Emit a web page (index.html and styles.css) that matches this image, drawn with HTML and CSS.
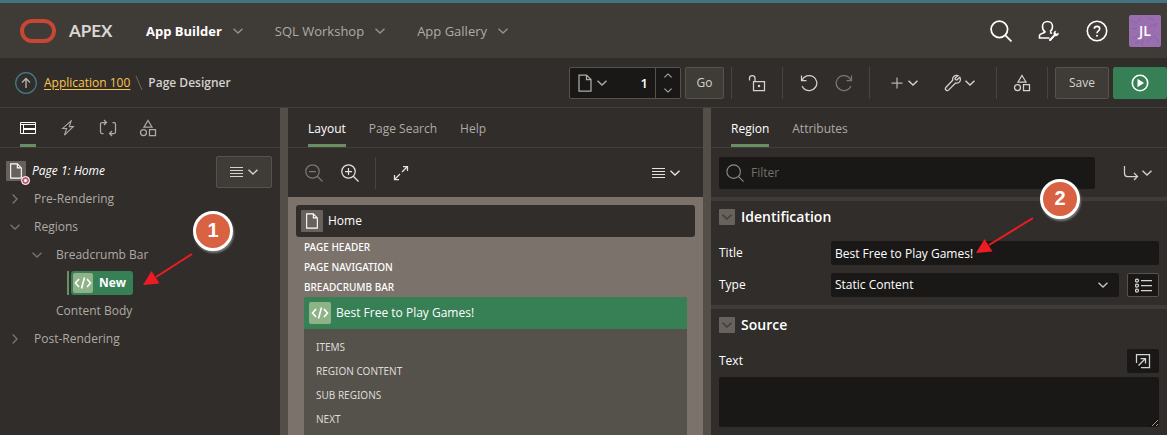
FILE: index.html
```html
<!DOCTYPE html>
<html lang="en">
<head>
<meta charset="utf-8">
<title>Page Designer</title>
<link rel="stylesheet" href="styles.css">
</head>
<body>
<svg class="defs" aria-hidden="true">
  <symbol id="chev" viewBox="0 0 10 6"><path d="M.5.7 5 5 9.500.7"/></symbol>
  <symbol id="page" viewBox="0 0 14 18"><path d="M1 1h7.500L13 5.500V17H1zM8.500 1v4.500H13"/></symbol>
  <symbol id="shapes" viewBox="0 0 18 18"><path d="M9 1.500 13 8H5zM10.500 10.500h6v6h-6z"/><circle cx="4.500" cy="13.500" r="3"/></symbol>
  <symbol id="menu" viewBox="0 0 13 12"><path d="M0 1.500h13M0 4.500h13M0 7.500h13M0 10.500h13"/></symbol>
  <symbol id="search" viewBox="0 0 20 20"><circle cx="8.500" cy="8.500" r="7.500"/><path d="m14 14 5.500 5.500"/></symbol>
  <symbol id="code" viewBox="0 0 18 12"><path d="M5 2 1.500 6 5 10M13 2l3.500 4L13 10M10.500.5l-3 11"/></symbol>
</svg>

<header class="header">
  <svg class="logo" viewBox="0 0 36 24"><rect x="2" y="2" width="32" height="20" rx="10"/></svg>
  <span class="brand">APEX</span>
  <nav class="nav">
    <button class="nav-item current">App Builder<svg class="ic chev"><use href="#chev"/></svg></button>
    <button class="nav-item">SQL Workshop<svg class="ic chev"><use href="#chev"/></svg></button>
    <button class="nav-item">App Gallery<svg class="ic chev"><use href="#chev"/></svg></button>
  </nav>
  <div class="header-tools">
    <button class="plain" aria-label="Search"><svg class="ic i22 thick"><use href="#search"/></svg></button>
    <button class="plain" aria-label="Administration"><svg class="ic i22 thick" viewBox="0 0 22 22"><path d="M11.500 18H1.500v-2.500c0-2 4.500-2.300 5.500-3.500C5 10.500 4.500 8.500 4.500 6.500 4.500 3.500 6.800 1.500 9.500 1.500s5 2 5 5c0 2-.8 4-2.500 5.200M12 12.500l2 1"/><path class="solid" d="M11 19.500 15.700 14.800C15 12.500 16.200 10.700 18.500 10.500L17.300 12.300 18.700 13.700 20.800 12.700C21 15.200 19 16.700 16.900 16.200L13 20.800C11.800 21.500 10.500 20.500 11 19.500z"/></svg></button>
    <button class="plain" aria-label="Help"><svg class="ic i22 thick" viewBox="0 0 22 22"><circle cx="11" cy="11" r="9.700"/><path d="M8.300 8.800C8.300 5.500 13.700 5.500 13.700 8.800 13.700 11 11 10.800 11 13.200"/><circle class="solid" cx="11" cy="15.700" r="1"/></svg></button>
    <button class="avatar" aria-label="Account"><svg class="avatar-art" viewBox="0 0 32 32"><path d="m2 5 5 3M12 2l-4 6M20 3l6 2M28 8l-3 5M3 14l5-1M4 24l5-4M14 25l-1 5M18 27l6-5M25 20l5 8M6 29l5-3M20 12l6-3"/></svg><span>JL</span></button>
  </div>
</header>

<div class="toolbar">
  <button class="plain" aria-label="Up"><svg class="up" viewBox="0 0 22 22"><circle cx="11" cy="11" r="10.300"/><path d="M11 16V6.500M7 10.500l4-4 4 4"/></svg></button>
  <nav class="crumbs"><a href="#app">Application 100</a><svg class="slash" viewBox="0 0 8 16"><path d="m1 1 6 14"/></svg><span>Page Designer</span></nav>
  <div class="actions">
    <div class="page-picker">
      <button class="plain pick" aria-label="Pick page"><svg class="ic page" viewBox="0 0 14 18"><use href="#page"/></svg><svg class="ic chev"><use href="#chev"/></svg></button>
      <input class="page-no" type="text" value="1" aria-label="Page number">
      <div class="spin"><button class="plain" aria-label="Next page"><svg class="ic chev tiny flip"><use href="#chev"/></svg></button><button class="plain" aria-label="Previous page"><svg class="ic chev tiny"><use href="#chev"/></svg></button></div>
    </div>
    <button class="btn go">Go</button>
    <div class="group g-lock"><button class="plain" aria-label="Unlocked"><svg class="ic i18" viewBox="0 0 18 18"><path d="M1.500 6.500V4C1.500.8 7 .8 7 4v3.500M5.500 7.500h11v9h-11z"/><path d="M10.500 11.500h1v1h-1z"/></svg></button></div>
    <div class="group g-undo"><button class="plain" aria-label="Undo"><svg class="ic i18" viewBox="0 0 18 18"><path d="M1.500 1.500v5h5M2 6.200C4 2 9 .3 13 2.500c4 2.300 5 7.500 2.300 11S7.500 18 4 14.800l-2-2.600"/></svg></button><button class="plain" aria-label="Redo" disabled><svg class="ic i18" viewBox="0 0 18 18"><path d="M16.500 1.500v5h-5M16 6.200C14 2 9 .3 5 2.500 1 4.800 0 10 2.700 13.500s7.800 4.500 11.300 1.300l2-2.600"/></svg></button></div>
    <div class="group g-menus"><button class="plain pair create" aria-label="Create"><svg class="ic i12 dim" viewBox="0 0 12 12"><path d="M6 .5v11M.5 6h11"/></svg><svg class="ic chev"><use href="#chev"/></svg></button><button class="plain pair" aria-label="Utilities"><svg class="ic i18" viewBox="0 0 18 18"><path d="M15.800 3.200 12.800 6l-1.500-.5L11 4.200l3-2.500c-2.800-1-6 .8-5.300 4.500L2 13.200c-1.800 2 .8 4.600 2.800 2.700L11.500 9c3.800.9 6-2.500 4.300-5.800z"/><path d="M3.600 14.200h.3"/></svg><svg class="ic chev"><use href="#chev"/></svg></button></div>
    <div class="group g-shared"><button class="plain" aria-label="Shared components"><svg class="ic i18"><use href="#shapes"/></svg></button></div>
    <div class="group g-save"><button class="btn save">Save</button><button class="btn run" aria-label="Save and run"><svg class="i18" viewBox="0 0 18 18"><circle cx="9" cy="9" r="7.700"/><path d="M6.500 4.700 13 9l-6.500 4.300z"/></svg></button></div>
  </div>
</div>

<main class="panes">
  <section class="pane">
    <div class="tabs tree-tabs">
      <button class="tab active" aria-label="Rendering"><svg class="ic i16 fine" viewBox="0 0 16 16"><path d="M.5 2.500h15v11H.5zM.5 4.500h15M3.500 4.500v9M3.500 8.500h12M3.500 9.500h12"/></svg></button>
      <button class="tab" aria-label="Dynamic actions"><svg class="ic i16" viewBox="0 0 16 18"><path d="M11.500 1 2 9.500h4.500L4 17l10-9.500H9.500L11.500 1z"/></svg></button>
      <button class="tab" aria-label="Processing"><svg class="ic i18" viewBox="0 0 18 18"><path d="M4.500 14.500H3q-1.500 0-1.500-1.500V5q0-1.500 1.500-1.500h4M5 1l2.500 2.500L5 6M13.500 3.500H15q1.500 0 1.500 1.500v8q0 1.500-1.500 1.500h-4M13 12l-2.500 2.500L13 17"/></svg></button>
      <button class="tab" aria-label="Shared components"><svg class="ic i18"><use href="#shapes"/></svg></button>
    </div>
    <div class="tree">
      <div class="tree-head">
        <span class="page-tile"><svg class="ic page" viewBox="0 0 14 18"><use href="#page"/></svg><span class="dot"></span></span>
        <em>Page 1: Home</em>
        <button class="btn pair tree-menu" aria-label="Tree menu"><svg class="ic menu"><use href="#menu"/></svg><svg class="ic chev"><use href="#chev"/></svg></button>
      </div>
      <ul>
        <li><div class="node"><svg class="ic chev side"><use href="#chev"/></svg>Pre-Rendering</div></li>
        <li><div class="node"><svg class="ic chev"><use href="#chev"/></svg>Regions</div>
          <ul>
            <li><div class="node"><svg class="ic chev"><use href="#chev"/></svg>Breadcrumb Bar</div>
              <div class="node picked"><span class="chip"><span class="code-tile small"><svg class="ic code"><use href="#code"/></svg></span>New</span></div></li>
            <li><div class="node leaf">Content Body</div></li>
          </ul></li>
        <li><div class="node"><svg class="ic chev side"><use href="#chev"/></svg>Post-Rendering</div></li>
      </ul>
    </div>
  </section>
  <div class="splitter"></div>

  <section class="pane">
    <div class="tabs text-tabs">
      <button class="tab active">Layout</button><button class="tab">Page Search</button><button class="tab">Help</button>
    </div>
    <div class="canvas-tools">
      <button class="plain" aria-label="Zoom out" disabled><svg class="ic i18" viewBox="0 0 18 18"><circle cx="7.500" cy="7.500" r="6.700"/><path d="m12.300 12.300 5.200 5.200M4 7.500h7"/></svg></button>
      <button class="plain zoom-in" aria-label="Zoom in"><svg class="ic i18" viewBox="0 0 18 18"><circle cx="7.500" cy="7.500" r="6.700"/><path d="m12.300 12.300 5.200 5.200M4 7.500h7M7.500 4v7"/></svg></button>
      <span class="rule"></span>
      <button class="plain" aria-label="Expand"><svg class="ic i16" viewBox="0 0 16 16"><path d="M10 1.500h4.500V6M14.500 1.500 9 7M1.500 10v4.500H6M1.500 14.500 7 9"/></svg></button>
      <button class="plain pair canvas-menu" aria-label="Layout menu"><svg class="ic menu"><use href="#menu"/></svg><svg class="ic chev"><use href="#chev"/></svg></button>
    </div>
    <div class="canvas">
      <div class="home"><span class="page-tile big"><svg class="ic page" viewBox="0 0 14 18"><use href="#page"/></svg></span>Home</div>
      <div class="slot">PAGE HEADER</div>
      <div class="slot">PAGE NAVIGATION</div>
      <div class="slot">BREADCRUMB BAR</div>
      <div class="region">
        <div class="region-head"><span class="code-tile"><svg class="ic code"><use href="#code"/></svg></span>Best Free to Play Games!</div>
        <div class="region-body"><div>ITEMS</div><div>REGION CONTENT</div><div>SUB REGIONS</div><div>NEXT</div></div>
      </div>
    </div>
  </section>
  <div class="splitter"></div>

  <section class="pane">
    <div class="tabs text-tabs">
      <button class="tab active">Region</button><button class="tab">Attributes</button>
    </div>
    <div class="filter-row">
      <label class="filter"><svg class="ic i18" viewBox="0 0 20 20"><use href="#search"/></svg><input type="text" placeholder="Filter" aria-label="Filter"></label>
      <button class="plain pair" aria-label="Go to group"><svg class="ic i16" viewBox="0 0 16 16"><path d="M1.500 1v7.500q0 3 3 3h9.500M11 8l3.500 3.500L11 15"/></svg><svg class="ic chev"><use href="#chev"/></svg></button>
    </div>
    <div class="props">
      <h2><button class="fold" aria-label="Collapse Identification"><svg class="ic chev"><use href="#chev"/></svg></button>Identification</h2>
      <div class="field"><label for="title">Title</label><input id="title" class="box" type="text" value="Best Free to Play Games!"></div>
      <div class="field"><label for="type">Type</label><div class="select-wrap"><select id="type" class="box"><option>Static Content</option></select><svg class="ic chev"><use href="#chev"/></svg></div><button class="side-btn lined" aria-label="Quick pick"><svg class="ic quick" viewBox="0 0 17 15"><path d="M6 2.500h11M6 7.500h11M6 12.500h11"/><circle cx="2" cy="2.500" r="1.500"/><circle cx="2" cy="7.500" r="1.500"/><circle cx="2" cy="12.500" r="1.500"/></svg></button></div>
    </div>
    <div class="props">
      <h2><button class="fold" aria-label="Collapse Source"><svg class="ic chev"><use href="#chev"/></svg></button>Source</h2>
      <div class="field spread"><label for="text">Text</label><button class="side-btn" aria-label="Open editor"><svg class="ic i16" viewBox="0 0 16 16"><path d="M1.500 10V1.500h13v13H6M5.500 5.500h5v5M10.500 5.500 3.500 12.500"/></svg></button></div>
      <textarea id="text" class="box area"></textarea>
    </div>
  </section>
</main>

<div class="callout one">1</div>
<svg class="arrow arrow-one" viewBox="0 0 60 40"><path class="shaft" d="M52 6 16 29"/><path class="tip" d="m3 37 8.500-14 8 12.500z"/></svg>
<div class="callout two">2</div>
<svg class="arrow arrow-two" viewBox="0 0 60 40"><path class="shaft" d="M60 2 16 29"/><path class="tip" d="m3 37 8.500-14 8 12.500z"/></svg>
</body>
</html>
```

FILE: styles.css
```css
* { box-sizing: border-box; }
html, body { height: 100%; }
body {
  margin: 0;
  display: flex;
  flex-direction: column;
  overflow: hidden;
  background: #312d2a;
  border-top: 3px solid #437280;
  color: #fff;
  font: 12px/16px "Open Sans", "Noto Sans", sans-serif;
}
button, input, select, textarea { font: inherit; color: inherit; margin: 0; }
button { cursor: pointer; padding: 0; }
.defs { position: absolute; width: 0; height: 0; }

.ic { display: block; flex: none; fill: none; stroke: currentColor; stroke-width: 1.25; }
.thick { stroke-width: 1.6; }
.fine { stroke-width: 1; }
.ic .solid { fill: currentColor; stroke: none; }
.chev { width: 10px; height: 6px; overflow: visible; stroke-width: 1.4; }
.tiny { width: 8px; height: 5px; }
.flip { transform: rotate(180deg); }
.side { transform: rotate(-90deg); }
.page { width: 14px; height: 18px; }
.menu { width: 13px; height: 12px; stroke-width: 1; }
.code { width: 18px; height: 12px; stroke-width: 1.6; }
.i12 { width: 12px; height: 12px; }
.i16 { width: 16px; height: 16px; }
.i18 { width: 18px; height: 18px; }
.i22 { width: 22px; height: 22px; }
.dim { color: #b5b2ae; }

.plain { display: flex; align-items: center; justify-content: center; background: none; border: 0; }
.plain:disabled { color: #7b7773; }
.pair { gap: 6px; }
.btn {
  display: flex; align-items: center; justify-content: center;
  height: 32px; background: #3f3b36; border: 1px solid #57524b; border-radius: 2px; color: #d5d2cf;
}

.header { flex: none; display: flex; align-items: center; height: 55px; padding: 0 6px 0 20px; background: #3f3b36; }
.logo { width: 36px; height: 24px; fill: none; stroke: #c74634; stroke-width: 4; }
.brand { margin-left: 13px; width: 77px; font-family: Lato, "Open Sans", sans-serif; font-size: 17px; font-weight: 700; color: #d9d6d3; }
.nav { display: flex; gap: 32px; }
.nav-item { display: flex; align-items: center; gap: 11px; background: none; border: 0; color: #aeaba7; font-size: 13px; }
.nav-item .chev { color: #96928d; }
.nav-item.current { color: #fff; font-weight: 700; }
.header-tools { margin-left: auto; display: flex; align-items: center; gap: 26px; }
.avatar { position: relative; width: 32px; height: 32px; margin-left: -5px; background: #9a6fb0; border: 0; border-radius: 2px; font-size: 14px; font-weight: 600; }
.avatar span { position: relative; }
.avatar-art { position: absolute; inset: 0; fill: none; stroke: #8b62a2; stroke-width: 1; }

.toolbar { flex: none; display: flex; align-items: center; height: 50px; padding-left: 15px; border-bottom: 1px solid #423e3a; }
.up { width: 22px; height: 22px; fill: none; stroke: #b5b2ae; stroke-width: 1.4; }
.up circle { stroke: #437c8c; stroke-width: 1.2; }
.crumbs { display: flex; align-items: center; margin-left: 7px; gap: 5px; font-weight: 600; color: #d5d2cf; }
.crumbs a { color: #fbc54f; font-weight: 400; text-underline-offset: 2px; }
.slash { width: 8px; height: 16px; stroke: #6d6964; fill: none; }
.actions { margin-left: auto; display: flex; color: #d5d2cf; }
.page-picker { display: flex; width: 112px; height: 32px; background: #1a1816; border: 1px solid #57524b; border-radius: 2px; }
.pick { gap: 5px; padding-left: 8px; color: #aeaba7; }
.page-no { flex: 1; min-width: 0; padding: 0 7px 0 0; border: 0; background: none; color: #fff; font-size: 13px; font-weight: 600; text-align: right; }
.spin { display: grid; width: 25px; border-left: 1px solid #57524b; color: #aeaba7; }
.go { width: 39px; margin: 0 7px 0 4px; }
.group { display: flex; align-items: center; justify-content: center; height: 32px; border-left: 1px solid #484440; }
.g-lock { width: 51px; }
.g-undo { width: 87px; gap: 17px; }
.g-menus { width: 127px; gap: 26px; padding-right: 1px; }
.g-menus .pair { gap: 3px; }
.g-menus .create { gap: 5px; }
.g-shared { width: 51px; }
.g-save { padding-left: 7px; gap: 4px; }
.save { width: 54px; }
.run { width: 54px; background: #377f54; border-color: #377f54; color: #fff; }
.run svg { fill: currentColor; }
.run circle { fill: none; stroke: currentColor; stroke-width: 1.6; }

.panes { flex: 1; min-height: 0; display: grid; grid-template-columns: 280px 8px 415fr 8px 456fr; }
.pane { min-width: 0; overflow: hidden; display: flex; flex-direction: column; }
.splitter { background: #534e47; }
.tabs { flex: none; display: flex; height: 40px; padding: 0 20px; border-bottom: 1px solid #423e3a; }
.tree-tabs { gap: 24px; }
.tree-tabs .tab { width: 16px; }
.text-tabs { gap: 23px; }
.tab { display: flex; align-items: center; justify-content: center; border: 0; border-top: 5px solid transparent; border-bottom: 3px solid transparent; background: none; color: #aeaba7; }
.tree-tabs .tab { border-top-width: 3px; }
.tab.active { color: #fff; border-bottom-color: #6a8f64; }
.text-tabs .active { font-weight: 500; }

.tree { color: #aeaba7; }
.tree ul { margin: 0; padding: 0; list-style: none; }
.tree ul ul { padding-left: 22px; }
.tree-head { display: flex; align-items: center; height: 32px; margin: 8px 8px 0 6px; gap: 6px; padding-bottom: 3px; color: #fff; }
.tree-head em { font-weight: 500; }
.tree-menu { width: 56px; margin: 3px 0 0 auto; gap: 5px; }
.page-tile { position: relative; display: flex; align-items: center; justify-content: center; width: 20px; height: 20px; border-radius: 1px; background: #67605b; }
.page-tile .page { height: 16px; }
.page-tile.big { width: 22px; height: 22px; }
.dot { position: absolute; right: -4px; bottom: -4px; width: 9px; height: 9px; border: 3px solid #b75f77; outline: 1px solid #fff; outline-offset: -1px; border-radius: 50%; background: #fff; }
.tree-head + ul { margin-top: -3px; }
.node { display: flex; align-items: center; height: 28px; gap: 14px; padding-left: 10px; }
.node .chev { color: #77736e; }
.node.leaf { padding-left: 34px; }
.node.picked { padding-left: 45px; }
.chip { display: flex; align-items: center; gap: 6px; height: 24px; padding: 0 7px 0 2px; border-radius: 3px; background: #377f54; color: #fff; font-weight: 700; }
.picked::before { content: ""; width: 2px; height: 24px; margin-right: -12px; background: #6a8f64; }
.code-tile { display: flex; align-items: center; justify-content: center; width: 22px; height: 22px; border-radius: 2px; background: #8fb388; color: #fff; }
.code-tile.small { width: 20px; height: 20px; }

.canvas-tools { flex: none; display: flex; align-items: center; height: 49px; padding: 0 23px 0 17px; color: #e5e3e0; }
.zoom-in { margin-left: 18px; }
.rule { width: 1px; height: 32px; margin: 0 17px 0 16px; background: #484440; }
.canvas-menu { margin-left: auto; gap: 5px; }
.canvas { flex: 1; padding: 8px 8px 0; background: #7c726c; }
.home { display: flex; align-items: center; gap: 5px; height: 32px; padding: 0 5px; border-radius: 3px; background: #312d2a; }
.slot { height: 20px; padding-left: 8px; font-family: "Noto Sans", sans-serif; font-size: 10px; line-height: 20px; font-weight: 500; }
.region { height: 180px; margin: 0 8px; background: #55514b; border-radius: 3px 3px 0 0; overflow: hidden; }
.region-head { display: flex; align-items: center; gap: 5px; height: 32px; padding: 0 5px; background: #377f54; }
.region-body { padding: 6px 12px; font-family: "Noto Sans", sans-serif; font-size: 10px; line-height: 24px; color: #dddad7; }

.filter-row { flex: none; display: flex; align-items: center; justify-content: space-between; height: 49px; padding: 0 15px 0 8px; color: #d5d2cf; }
.filter { display: flex; align-items: center; gap: 7px; width: 376px; height: 32px; padding: 0 7px; border-radius: 2px; background: #1a1816; color: #8d8985; }
.filter input { flex: 1; min-width: 0; padding: 0; border: 0; background: none; }
.filter input::placeholder { color: #74706c; opacity: 1; }
.filter-row .pair { gap: 3px; }
.props { border-top: 4px solid #3f3b38; padding: 8px; }
.props h2 { display: flex; align-items: center; gap: 6px; margin: 0 0 16px; font-size: 14px; line-height: 16px; font-weight: 600; }
.fold { display: flex; align-items: center; justify-content: center; width: 16px; height: 16px; border: 0; border-radius: 1px; background: #67635c; color: #3f3b36; }
.field { display: flex; align-items: center; height: 24px; }
.field + .field { margin-top: 8px; }
.field > label { width: 112px; }
.box { height: 24px; border: 0; border-radius: 2px; background: #1a1816; color: #fff; padding: 0 4px; }
.field > .box { flex: 1; min-width: 0; }
.select-wrap { position: relative; flex: 1; display: flex; }
.select-wrap select { width: 100%; appearance: none; }
.select-wrap .chev { position: absolute; right: 11px; top: 9px; pointer-events: none; color: #c5c2bf; }
.side-btn { display: flex; align-items: center; justify-content: center; width: 32px; height: 24px; margin-left: 8px; border: 0; border-radius: 2px; background: #1a1816; color: #d5d2cf; }
.side-btn.lined { border: 1px solid #57524b; }
.quick { width: 17px; height: 15px; }
.spread { justify-content: space-between; }
.area { display: block; width: 100%; height: 50px; margin-top: 4px; resize: vertical; }

.callout { position: absolute; width: 40px; height: 40px; border: 3px solid #fff; border-radius: 50%; background: #d96242; box-shadow: 1px 2px 2px #777; font: 700 20px/33px "Liberation Sans", sans-serif; text-align: center; }
.callout.one { left: 193px; top: 211px; }
.callout.two { left: 1040px; top: 179px; }
.arrow { position: absolute; width: 60px; height: 40px; pointer-events: none; }
.arrow-one { left: 140px; top: 248px; }
.arrow-two { left: 973px; top: 216px; }
.shaft { fill: none; stroke: #ed1c24; stroke-width: 2; }
.tip { fill: #ed1c24; }
```
